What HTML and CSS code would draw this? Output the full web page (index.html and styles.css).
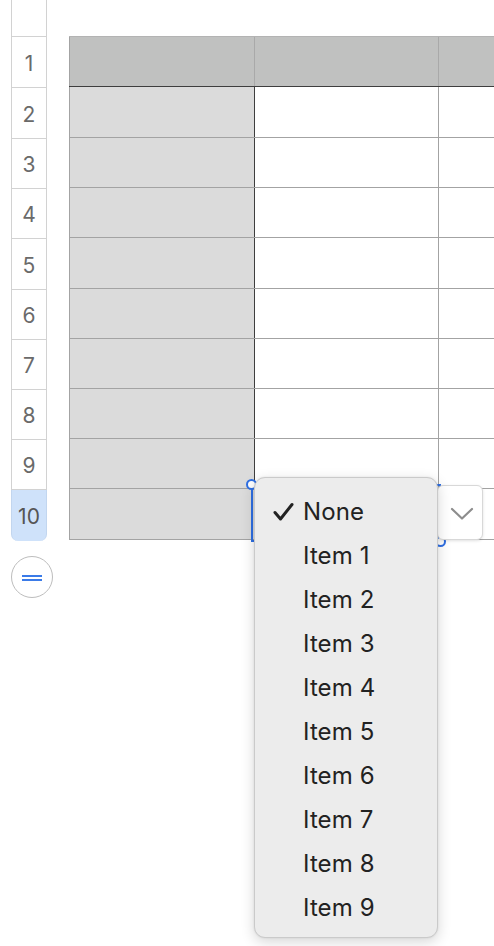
FILE: index.html
```html
<!DOCTYPE html>
<html>
<head>
<meta charset="utf-8">
<link rel="stylesheet" href="styles.css">
</head>
<body>
<div class="sheet">
  <div class="rowheads">
    <div class="rh corner"></div>
    <div class="rh h51">1</div>
    <div class="rh h51">2</div>
    <div class="rh">3</div>
    <div class="rh">4</div>
    <div class="rh h51">5</div>
    <div class="rh">6</div>
    <div class="rh">7</div>
    <div class="rh">8</div>
    <div class="rh">9</div>
    <div class="rh h51 sel">10</div>
    <div class="addrow"><span class="eq"></span></div>
  </div>
  <div class="grid">
    <div class="row head h51"><div class="c c1"></div><div class="c c2"></div><div class="c c3"></div></div>
    <div class="row h51"><div class="c c1"></div><div class="c c2"></div><div class="c c3"></div></div>
    <div class="row"><div class="c c1"></div><div class="c c2"></div><div class="c c3"></div></div>
    <div class="row"><div class="c c1"></div><div class="c c2"></div><div class="c c3"></div></div>
    <div class="row h51"><div class="c c1"></div><div class="c c2"></div><div class="c c3"></div></div>
    <div class="row"><div class="c c1"></div><div class="c c2"></div><div class="c c3"></div></div>
    <div class="row"><div class="c c1"></div><div class="c c2"></div><div class="c c3"></div></div>
    <div class="row"><div class="c c1"></div><div class="c c2"></div><div class="c c3"></div></div>
    <div class="row"><div class="c c1"></div><div class="c c2"></div><div class="c c3"></div></div>
    <div class="row h51 last"><div class="c c1"></div><div class="c c2"></div><div class="c c3"></div></div>
  </div>
</div>

<div class="selection">
  <span class="handle tl"></span>
  <span class="handle br"></span>
</div>

<div class="popbtn">
  <svg width="24" height="14" viewBox="0 0 24 14"><path d="M2 2 L12 11.5 L22 2" fill="none" stroke="#8d8d8d" stroke-width="2.2" stroke-linecap="round" stroke-linejoin="round"/></svg>
</div>

<div class="menu">
  <div class="item checked">
    <svg class="check" width="22" height="20" viewBox="0 0 22 20"><path d="M2 10.5 L7.5 17 L19 2.5" fill="none" stroke="#222" stroke-width="3" stroke-linecap="round" stroke-linejoin="round"/></svg>
    None
  </div>
  <div class="item">Item 1</div>
  <div class="item">Item 2</div>
  <div class="item">Item 3</div>
  <div class="item">Item 4</div>
  <div class="item">Item 5</div>
  <div class="item">Item 6</div>
  <div class="item">Item 7</div>
  <div class="item">Item 8</div>
  <div class="item">Item 9</div>
</div>
</body>
</html>
```

FILE: styles.css
```css
html, body {
  margin: 0;
  padding: 0;
  background: #ffffff;
  width: 494px;
  height: 946px;
  overflow: hidden;
  font-family: Inter, "Liberation Sans", sans-serif;
}

.sheet {
  display: flex;
  align-items: flex-start;
}

.rowheads {
  margin-left: 11px;
  width: 36px;
  display: flex;
  flex-direction: column;
  align-items: stretch;
}

.rh {
  box-sizing: border-box;
  height: 50px;
  border-left: 1px solid #d2d2d2;
  border-right: 1px solid #d2d2d2;
  border-bottom: 1px solid #d2d2d2;
  display: flex;
  align-items: center;
  justify-content: center;
  font-size: 21px;
  color: #6a6a6a;
  padding-top: 2px;
}

.rh.h51 { height: 51px; }
.rh.corner { height: 37px; }

.rh.sel {
  background: #cfe2fa;
  border-color: #c2d6ef;
  border-bottom: none;
  border-radius: 0 0 7px 7px;
  height: 51px;
  color: #555;
}

.addrow {
  margin-top: 15px;
  width: 42px;
  height: 42px;
  box-sizing: border-box;
  border: 1px solid #bdbdbd;
  border-radius: 50%;
  background: #fff;
  display: flex;
  align-items: center;
  justify-content: center;
  align-self: flex-start;
}

.eq {
  display: block;
  width: 20px;
  height: 2px;
  border-top: 2px solid #3b7be8;
  border-bottom: 2px solid #3b7be8;
  box-sizing: content-box;
  margin-top: 1px;
}

.grid {
  margin-left: 22px;
  margin-top: 36px;
  width: 425px;
  display: flex;
  flex-direction: column;
}

.row {
  display: flex;
  height: 50px;
  box-sizing: border-box;
  border-bottom: 1px solid #a3a3a3;
}

.row.h51 { height: 51px; }

.row.head {
  border-top: 1px solid #b3b3b3;
  border-bottom: 1px solid #3e3e3e;
}

.c {
  box-sizing: border-box;
  height: 100%;
}

.c1 {
  width: 186px;
  background: #dbdbdb;
  border-left: 1px solid #a3a3a3;
  border-right: 1px solid #3e3e3e;
}

.c2 {
  width: 184px;
  background: #ffffff;
  border-right: 1px solid #a3a3a3;
}

.c3 {
  flex: 1;
  background: #ffffff;
}

.head .c1, .head .c2, .head .c3 {
  background: #c0c1c0;
}

.head .c1 {
  border-right: 1px solid #a9a9a9;
}

.head .c2 {
  border-right: 1px solid #a9a9a9;
}

.selection {
  position: absolute;
  left: 251px;
  top: 484px;
  width: 190px;
  height: 58px;
  box-sizing: border-box;
  border: 2px solid #2f6fe3;
}

.handle {
  position: absolute;
  width: 11px;
  height: 11px;
  box-sizing: border-box;
  border: 2px solid #2f6fe3;
  background: #fff;
  border-radius: 50%;
}

.handle.tl { left: -7px; top: -7px; }
.handle.br { right: -7px; bottom: -7px; }

.popbtn {
  position: absolute;
  left: 437px;
  top: 485px;
  width: 46px;
  height: 55px;
  box-sizing: border-box;
  background: #ffffff;
  border: 1px solid #d8d8d8;
  border-radius: 6px;
  box-shadow: 0 1px 3px rgba(0,0,0,0.12);
  display: flex;
  align-items: center;
  justify-content: center;
  padding-left: 4px;
  padding-top: 2px;
}

.menu {
  position: absolute;
  left: 254px;
  top: 477px;
  width: 184px;
  height: 461px;
  box-sizing: border-box;
  background: #ececec;
  border: 1px solid #cacaca;
  border-radius: 11px;
  box-shadow: 0 4px 14px rgba(0,0,0,0.16), 0 0 2px rgba(0,0,0,0.1);
  padding: 12px 0 9px 0;
  display: flex;
  flex-direction: column;
}

.item {
  position: relative;
  height: 44px;
  line-height: 44px;
  padding-left: 48px;
  font-size: 24px;
  color: #222222;
  letter-spacing: 0.1px;
}

.check {
  position: absolute;
  left: 18px;
  top: 12px;
}
```
